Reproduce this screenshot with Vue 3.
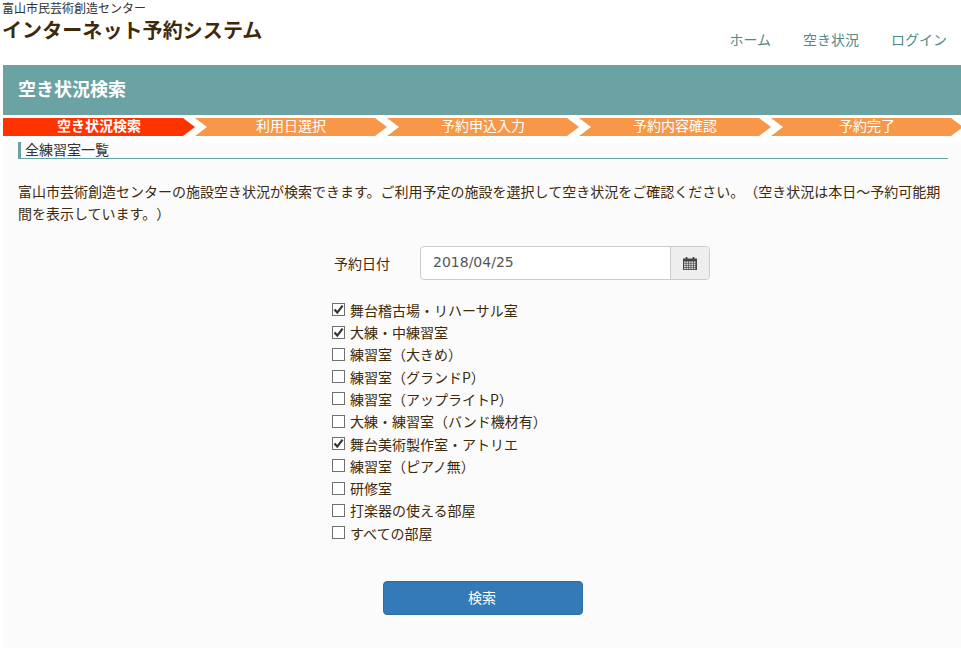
<template>
  <div class="page">
    <header class="head">
      <div class="brand">
        <div class="org">富山市民芸術創造センター</div>
        <div class="title">インターネット予約システム</div>
      </div>
      <nav class="nav">
        <a v-for="n in navs" :key="n">{{ n }}</a>
      </nav>
    </header>

    <div class="band">空き状況検索</div>

    <div class="steps">
      <div
        v-for="(s, i) in steps"
        :key="s"
        class="step"
        :class="{ active: i === 0, first: i === 0 }"
      >{{ s }}</div>
    </div>

    <main class="content">
      <h2 class="sub">全練習室一覧</h2>
      <p class="lead">富山市芸術創造センターの施設空き状況が検索できます。ご利用予定の施設を選択して空き状況をご確認ください。（空き状況は本日～予約可能期間を表示しています。）</p>

      <div class="date-row">
        <label class="date-label">予約日付</label>
        <div class="date-group">
          <input class="date-input" type="text" value="2018/04/25" readonly />
          <span class="addon">
            <svg width="14" height="14" viewBox="0 0 14 14">
              <path fill="#444" d="M0 2.5h2.6V1h1.8v1.5h5.2V1h1.8v1.5H14V14H0z" />
              <g fill="#ddd">
                <rect v-for="c in cells" :key="c.k" :x="c.x" :y="c.y" width="1.7" height="1.5" />
              </g>
            </svg>
          </span>
        </div>
      </div>

      <ul class="rooms">
        <li v-for="r in rooms" :key="r.name">
          <label class="room">
            <span class="box">
              <svg v-if="r.on" width="11" height="11" viewBox="0 0 11 11">
                <path d="M1.5 5.5 4.3 8.6 9.6 1.6" fill="none" stroke="#333" stroke-width="2.2" />
              </svg>
            </span>
            <span>{{ r.name }}</span>
          </label>
        </li>
      </ul>

      <div class="actions">
        <button class="search" type="button">検索</button>
      </div>
    </main>
  </div>
</template>

<script setup>
const navs = ['ホーム', '空き状況', 'ログイン']
const steps = ['空き状況検索', '利用日選択', '予約申込入力', '予約内容確認', '予約完了']

const rooms = [
  { name: '舞台稽古場・リハーサル室', on: true },
  { name: '大練・中練習室', on: true },
  { name: '練習室（大きめ）', on: false },
  { name: '練習室（グランドP）', on: false },
  { name: '練習室（アップライトP）', on: false },
  { name: '大練・練習室（バンド機材有）', on: false },
  { name: '舞台美術製作室・アトリエ', on: true },
  { name: '練習室（ピアノ無）', on: false },
  { name: '研修室', on: false },
  { name: '打楽器の使える部屋', on: false },
  { name: 'すべての部屋', on: false }
]

// calendar grid cells
const cells = []
for (let row = 0; row < 4; row++) {
  for (let col = 0; col < 5; col++) {
    cells.push({ k: row + '-' + col, x: 1.1 + col * 2.4, y: 5.4 + row * 2.1 })
  }
}
</script>

<style>
html,
body {
  margin: 0;
  background: #fff;
  overflow: hidden;
}
</style>

<style scoped>
.page {
  width: 961px;
  height: 648px;
  overflow: hidden;
  display: flex;
  flex-direction: column;
  padding-left: 3px;
  box-sizing: border-box;
  font-family: "Noto Sans CJK JP", "Liberation Sans", sans-serif;
  font-size: 14px;
  color: #3e2a0a;
  text-spacing-trim: space-all;
}

.head {
  height: 65px;
  display: flex;
  justify-content: space-between;
  flex-shrink: 0;
  margin-left: -1px;
}

.org {
  font-size: 12px;
  line-height: 16px;
  color: #333;
}

.title {
  font-size: 20px;
  line-height: 28px;
  font-weight: 700;
  letter-spacing: 0.08px;
  color: #3e2a0a;
}

.nav {
  display: flex;
  gap: 32px;
  padding: 30px 14px 0 0;
  line-height: 18px;
  color: #4f8a8b;
}

.band {
  height: 50px;
  flex-shrink: 0;
  padding-left: 15px;
  line-height: 46px;
  font-size: 18px;
  font-weight: 700;
  color: #fff;
  background: #6ba3a5;
}

.steps {
  display: grid;
  grid-template-columns: repeat(5, 192px);
  height: 18px;
  margin-top: 3px;
  flex-shrink: 0;
}

.step {
  height: 18px;
  line-height: 15px;
  text-align: center;
  color: #fff;
  background: #f89748;
  clip-path: polygon(0 0, 180px 0, 192px 50%, 180px 100%, 0 100%, 12px 50%);
}

.step.active {
  font-weight: 700;
  background: #ff3300;
}

.step.first {
  clip-path: polygon(0 0, 180px 0, 192px 50%, 180px 100%, 0 100%);
}

.content {
  flex: 1;
  margin-top: 6px;
  padding: 0 13px 0 15px;
  background: #fbfbfb;
}

.sub {
  margin: 0;
  height: 16px;
  padding-left: 4px;
  border-left: 3px solid #6ba3a5;
  border-bottom: 1px solid #6ba3a5;
  font-size: 14px;
  font-weight: 400;
  line-height: 14px;
  color: #333;
}

.lead {
  margin: 21px 0 0;
  line-height: 22px;
}

.date-row {
  display: flex;
  align-items: center;
  margin: 22px 0 0 316px;
}

.date-label {
  width: 86px;
  line-height: 20px;
}

.date-group {
  display: flex;
  width: 290px;
  height: 34px;
  box-sizing: border-box;
  border: 1px solid #ccc;
  border-radius: 4px;
  background: #fff;
  overflow: hidden;
}

.date-input {
  flex: 1;
  min-width: 0;
  padding: 0 12px 2px;
  border: 0;
  outline: 0;
  background: transparent;
  font-family: "DejaVu Sans", sans-serif;
  font-size: 14px;
  color: #555;
}

.addon {
  width: 38px;
  display: flex;
  align-items: center;
  justify-content: center;
  border-left: 1px solid #ccc;
  background: #eee;
}

.rooms {
  list-style: none;
  margin: 18.8px 0 0 314px;
  padding: 0;
}

.rooms li {
  height: 22.3px;
}

.room {
  display: flex;
  align-items: center;
  gap: 5px;
  height: 22px;
}

.box {
  width: 13px;
  height: 13px;
  box-sizing: border-box;
  border: 1px solid #707070;
  background: #fff;
  display: flex;
  align-items: center;
  justify-content: center;
  flex-shrink: 0;
}

.actions {
  display: flex;
  margin: 37px 0 0 365px;
}

.search {
  width: 200px;
  height: 34px;
  padding: 0 2px 2px 0;
  border: 1px solid #2e6da4;
  border-radius: 4px;
  background: #337ab7;
  color: #fff;
  font-family: inherit;
  font-size: 14px;
}
</style>
